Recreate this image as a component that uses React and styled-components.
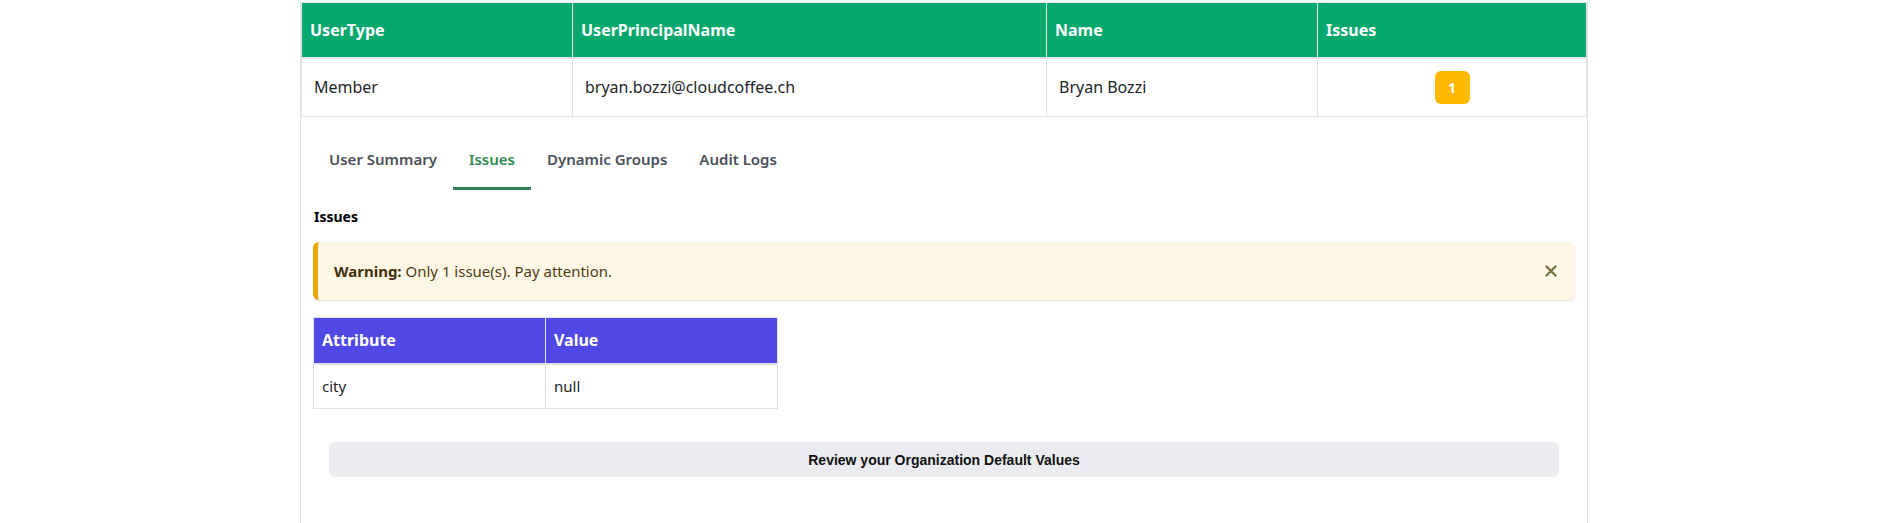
import React, { useState } from 'react';
import styled, { createGlobalStyle } from 'styled-components';

const GlobalStyle = createGlobalStyle`
  html, body {
    margin: 0;
    padding: 0;
    background: #ffffff;
  }
  body {
    font-family: "Noto Sans", "Open Sans", sans-serif;
    color: #212529;
  }
`;

const Page = styled.div`
  padding-top: 2px;
`;

const Frame = styled.div`
  width: 1288px;
  margin: 0 auto;
  border-left: 1px solid #dee2e6;
  border-right: 1px solid #dee2e6;
  box-sizing: border-box;
`;

const MainTable = styled.table`
  width: 100%;
  border-collapse: collapse;
  table-layout: fixed;
`;

const HeadCell = styled.th`
  background: ${p => p.$bg};
  color: #ffffff;
  font-size: 16px;
  font-weight: 700;
  text-align: left;
  height: ${p => p.$h}px;
  padding: 0 8px;
  border: 1px solid #e4e6ea;
  border-bottom: 2px solid #dee2e6;
  box-sizing: border-box;
`;

const Cell = styled.td`
  font-size: ${p => p.$size || 15}px;
  height: ${p => p.$h}px;
  padding: 0 ${p => p.$pad ?? 12}px;
  text-align: ${p => (p.$center ? 'center' : 'left')};
  border: 1px solid #dee2e6;
  box-sizing: border-box;
`;

const Badge = styled.span`
  display: inline-flex;
  align-items: center;
  justify-content: center;
  width: 35px;
  height: 33px;
  border-radius: 6px;
  background: #ffb900;
  color: #ffffff;
  font-size: 14px;
  font-weight: 700;
`;

const Detail = styled.div`
  padding: 10px 12px 60px;
`;

const TabList = styled.div`
  display: flex;
`;

const Tab = styled.button`
  background: none;
  border: none;
  border-bottom: 3px solid ${p => (p.$active ? '#2f7d55' : 'transparent')};
  padding: 22px 16px 18px;
  font-family: inherit;
  font-size: 15px;
  font-weight: 600;
  line-height: 20px;
  color: ${p => (p.$active ? '#2c8a52' : '#4a4f58')};
  cursor: pointer;
`;

const Heading = styled.h4`
  margin: 17px 0 0 1px;
  font-size: 14px;
  font-weight: 700;
  line-height: 20px;
  color: #000000;
`;

const Alert = styled.div`
  margin-top: 15px;
  height: 58px;
  display: flex;
  align-items: center;
  justify-content: space-between;
  padding: 0 14px 0 16px;
  background: #fff7e6;
  border-left: 5px solid #e8a600;
  border-radius: 6px;
  box-shadow: 0 1px 2px rgba(0, 0, 0, 0.12);
  font-size: 15px;
  color: #4d3d12;
  box-sizing: border-box;
`;

const Strong = styled.strong`
  color: #3e2f05;
`;

const Close = styled.button`
  background: none;
  border: none;
  padding: 4px;
  display: flex;
  cursor: pointer;
`;

const AttrTable = styled.table`
  margin-top: 17px;
  width: 465px;
  border-collapse: collapse;
  table-layout: fixed;
`;

const ButtonRow = styled.div`
  padding: 33px 16px 0;
`;

const ReviewButton = styled.button`
  width: 100%;
  height: 35px;
  border: none;
  border-radius: 6px;
  background: #ebecf0;
  font-family: "Liberation Sans", Arial, sans-serif;
  font-size: 14px;
  font-weight: 700;
  color: #111111;
  cursor: pointer;
`;

const tabs = ['User Summary', 'Issues', 'Dynamic Groups', 'Audit Logs'];

export default function App() {
  const [tab, setTab] = useState('Issues');
  const [showAlert, setShowAlert] = useState(true);

  return (
    <Page>
      <GlobalStyle />
      <Frame>
        <MainTable>
          <colgroup>
            <col style={{ width: 271 }} />
            <col style={{ width: 474 }} />
            <col style={{ width: 271 }} />
            <col />
          </colgroup>
          <thead>
            <tr>
              <HeadCell $bg="#07a86d" $h={55}>UserType</HeadCell>
              <HeadCell $bg="#07a86d" $h={55}>UserPrincipalName</HeadCell>
              <HeadCell $bg="#07a86d" $h={55}>Name</HeadCell>
              <HeadCell $bg="#07a86d" $h={55}>Issues</HeadCell>
            </tr>
          </thead>
          <tbody>
            <tr>
              <Cell $h={59} $size={16}>Member</Cell>
              <Cell $h={59} $size={16}>bryan.bozzi@cloudcoffee.ch</Cell>
              <Cell $h={59} $size={16}>Bryan Bozzi</Cell>
              <Cell $h={59} $center><Badge>1</Badge></Cell>
            </tr>
          </tbody>
        </MainTable>

        <Detail>
          <TabList>
            {tabs.map(t => (
              <Tab key={t} $active={t === tab} onClick={() => setTab(t)}>{t}</Tab>
            ))}
          </TabList>

          <Heading>Issues</Heading>

          {showAlert && (
            <Alert>
              <span><Strong>Warning:</Strong> Only 1 issue(s). Pay attention.</span>
              <Close onClick={() => setShowAlert(false)} aria-label="Close">
                <svg width="12" height="12" viewBox="0 0 12 12">
                  <path d="M1.5 1.5 L10.5 10.5 M10.5 1.5 L1.5 10.5" stroke="#7a6a3c" strokeWidth="2.2" strokeLinecap="round" />
                </svg>
              </Close>
            </Alert>
          )}

          <AttrTable>
            <thead>
              <tr>
                <HeadCell $bg="#5048e5" $h={46}>Attribute</HeadCell>
                <HeadCell $bg="#5048e5" $h={46}>Value</HeadCell>
              </tr>
            </thead>
            <tbody>
              <tr>
                <Cell $h={45} $pad={8}>city</Cell>
                <Cell $h={45} $pad={8}>null</Cell>
              </tr>
            </tbody>
          </AttrTable>

          <ButtonRow>
            <ReviewButton>Review your Organization Default Values</ReviewButton>
          </ButtonRow>
        </Detail>
      </Frame>
    </Page>
  );
}
